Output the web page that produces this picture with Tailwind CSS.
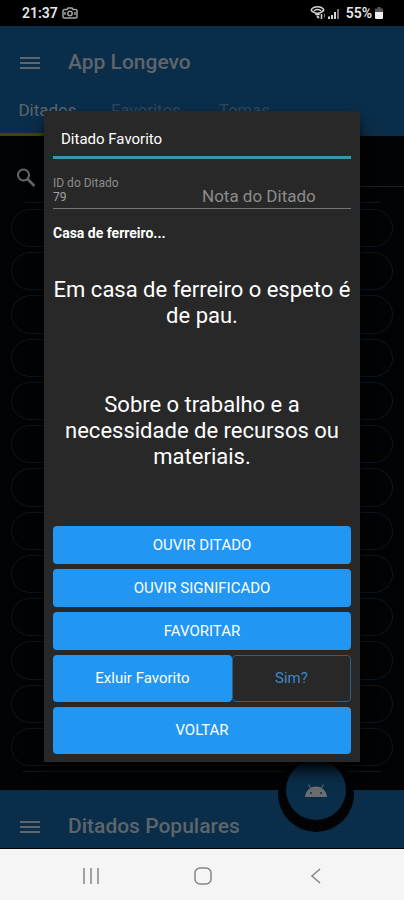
<!DOCTYPE html>
<html lang="pt-BR">
<head>
    <meta charset="UTF-8">
    <meta name="viewport" content="width=device-width, initial-scale=1.0">
    <title>App Longevo</title>
    <script src="https://cdn.jsdelivr.net/npm/@tailwindcss/browser@4"></script>
</head>
<body class="bg-black font-['Roboto',sans-serif]">
    <div class="relative flex min-h-screen flex-col bg-[#020304]">
        <!-- Status bar -->
        <div class="flex h-[26px] items-center justify-between bg-black pl-[22px] pr-5 text-sm font-semibold text-gray-200">
            <div class="flex items-center gap-1">
                <span>21:37</span>
                <svg class="h-3 w-4" viewBox="0 0 16 12" fill="none" stroke="#a3a3a3" stroke-width="1.5">
                    <path d="M5 2.5 6 1h4l1 1.500h2.500A1.500 1.500 0 0 1 15 4v5.500a1.500 1.500 0 0 1-1.500 1.500h-11A1.500 1.500 0 0 1 1 9.500V4a1.500 1.500 0 0 1 1.500-1.500z"/>
                    <circle cx="8" cy="6.500" r="2.200"/>
                    <path d="M3 5v3M13 5v3"/>
                </svg>
            </div>
            <div class="flex items-center gap-[2px]">
                <svg class="h-4 w-4" viewBox="0 0 16 16" fill="none" stroke="#d4d4d4" stroke-width="1.500">
                    <path d="M1 5C4 .8 11 .8 14 5"/>
                    <path d="M1 5c3 4.200 10 4.200 13 0"/>
                    <path d="M4 6c1.500-2 5.500-2 7 0M5.500 10c1-1 3-1 4 0"/>
                    <path d="m7 11 2 2" stroke-width="2"/>
                    <path d="M11.500 9v5" stroke-width="1.500"/>
                    <path d="M14.500 8.500v4" stroke="#777" stroke-width="1"/>
                </svg>
                <svg class="mr-1 h-3 w-3" viewBox="0 0 12 12" fill="#d4d4d4">
                    <path d="M0 9.500h2V12H0zM3 8h2v4H3zM6 5h2v7H6z"/>
                    <path d="M9 2h2v10H9z" fill="#777"/>
                </svg>
                <span>55%</span>
                <svg class="h-3 w-2.5" viewBox="0 0 10 12">
                    <path d="M3.500 0h3v1.500H9V12H1V1.500h2.500z" fill="#555"/>
                    <path d="M1 5h8v5.500A1.500 1.500 0 0 1 7.500 12h-5A1.500 1.500 0 0 1 1 10.500z" fill="#eee"/>
                </svg>
            </div>
        </div>

        <!-- App header -->
        <header class="bg-[#0a2d49] text-[#5e656b]">
            <div class="flex h-[73px] items-center gap-7 px-5">
                <button aria-label="Menu">
                    <svg class="h-4 w-5" viewBox="0 0 20 16" stroke="currentColor" stroke-width="2"><path d="M0 3h20M0 8h20M0 13h20"/></svg>
                </button>
                <h1 class="text-[21px] font-medium">App Longevo</h1>
            </div>
            <nav class="flex h-[37px] text-[17px]">
                <a href="#" class="w-[95px] border-b-3 border-[#4a4306] text-center leading-[22px]">Ditados</a>
                <a href="#" class="w-[102px] text-center leading-[22px] text-[#2f4659]">Favoritos</a>
                <a href="#" class="w-[95px] text-center leading-[22px] text-[#2f4659]">Temas</a>
            </nav>
        </header>

        <!-- Search and list -->
        <main class="flex flex-1 flex-col">
            <div class="ml-4 flex h-[51px] gap-4">
                <svg class="mt-8 h-5 w-5" viewBox="0 0 20 20" fill="none" stroke="#66696b" stroke-width="2">
                    <circle cx="7.500" cy="7" r="5.500"/>
                    <path d="m11.500 11 7 7" stroke-width="2.500"/>
                </svg>
                <input type="search" aria-label="Buscar ditado" class="min-w-0 flex-1 border-b border-[#1c1f22] bg-transparent text-gray-500 outline-none">
            </div>
            <div class="mx-[11px] mt-3 flex flex-1 flex-col">
                <div class="mx-3 h-1 rounded-b-full border-b border-[#0c1820]"></div>
                <ul class="mt-[6px] flex flex-1 flex-col gap-[5px]">
                    <li class="flex-1 rounded-full border border-[#0a1722]"></li>
                    <li class="flex-1 rounded-full border border-[#0a1722]"></li>
                    <li class="flex-1 rounded-full border border-[#0a1722]"></li>
                    <li class="flex-1 rounded-full border border-[#0a1722]"></li>
                    <li class="flex-1 rounded-full border border-[#0a1722]"></li>
                    <li class="flex-1 rounded-full border border-[#0a1722]"></li>
                    <li class="flex-1 rounded-full border border-[#0a1722]"></li>
                    <li class="flex-1 rounded-full border border-[#0a1722]"></li>
                    <li class="flex-1 rounded-full border border-[#0a1722]"></li>
                    <li class="flex-1 rounded-full border border-[#0a1722]"></li>
                    <li class="flex-1 rounded-full border border-[#0a1722]"></li>
                    <li class="flex-1 rounded-full border border-[#0a1722]"></li>
                    <li class="flex-1 rounded-full border border-[#0a1722]"></li>
                </ul>
                <div class="mx-3 mb-[18px] h-[6px] border-b border-[#0c1820]"></div>
            </div>
        </main>

        <!-- Bottom app bar -->
        <footer class="relative flex h-[58px] items-center gap-7 bg-[#0a2d49] px-5 pt-4 text-[#5e656b]">
            <button aria-label="Menu inferior">
                <svg class="h-4 w-5" viewBox="0 0 20 16" stroke="currentColor" stroke-width="2"><path d="M0 3h20M0 8h20M0 13h20"/></svg>
            </button>
            <h2 class="text-[21px] font-medium">Ditados Populares</h2>
            <button aria-label="Assistente" class="absolute -top-[34px] right-[50px] flex size-[76px] items-center justify-center rounded-full bg-[#020304]">
                <span class="mb-2 flex size-[60px] items-center justify-center rounded-full bg-[#0a2d49]">
                    <svg class="h-4 w-6" viewBox="0 0 24 16">
                        <path d="M1 15C1.500 9 6 4.500 12 4.500S22.500 9 23 15z" fill="#6b6e70"/>
                        <path d="m6.500 6-2-3.500m13 3.500 2-3.500" stroke="#6b6e70" stroke-width="1"/>
                        <circle cx="7" cy="11" r="1" fill="#0a2d49"/>
                        <circle cx="17" cy="11" r="1" fill="#0a2d49"/>
                    </svg>
                </span>
            </button>
        </footer>

        <!-- System navigation -->
        <div class="mt-px grid h-[51px] grid-cols-[1fr_46px_1fr] items-center bg-[#f5f5f5] pt-[2px] pl-[2px] text-[#858585]">
            <button aria-label="Recentes" class="justify-self-center">
                <svg class="h-4 w-4" viewBox="0 0 16 16" stroke="currentColor" stroke-width="1.500"><path d="M1 0v16M8 0v16M15 0v16"/></svg>
            </button>
            <button aria-label="Início" class="justify-self-center">
                <svg class="h-[18px] w-[18px]" viewBox="0 0 18 18" fill="none" stroke="currentColor" stroke-width="1.500"><rect x="1" y="1" width="16" height="16" rx="5"/></svg>
            </button>
            <button aria-label="Voltar" class="justify-self-center">
                <svg class="h-4 w-4" viewBox="0 0 16 16" fill="none" stroke="currentColor" stroke-width="1.500"><path d="m13 1-8 7 8 7"/></svg>
            </button>
        </div>

        <!-- Favorite dialog -->
        <div role="dialog" aria-labelledby="dialogTitle" class="absolute inset-x-11 top-[111px] bg-[#282828] px-[9px] pb-2 text-white shadow-lg shadow-black">
            <h2 id="dialogTitle" class="border-b-3 border-[#3c93b3] px-2 pt-[18px] pb-[7px] text-[15px] leading-5">Ditado Favorito</h2>
            <div class="mt-[17px] flex items-end border-b border-[#777] pb-1 text-[#8c8c8c]">
                <div class="w-1/2 text-xs leading-[14px]">
                    <label for="idDitado" class="block">ID do Ditado</label>
                    <input id="idDitado" type="text" value="79" class="block w-full text-[#a0a0a0] outline-none">
                </div>
                <input type="text" aria-label="Nota do Ditado" placeholder="Nota do Ditado" class="h-4 w-1/2 text-[17px] leading-4 outline-none placeholder:text-[#8c8c8c]">
            </div>
            <h3 class="mt-[14px] text-sm leading-5 font-bold">Casa de ferreiro...</h3>
            <p class="mt-[34px] text-center text-[22px] leading-[26px]">Em casa de ferreiro o espeto é de pau.</p>
            <p class="mt-[63px] text-center text-[22px] leading-[26px]">Sobre o trabalho e a necessidade de recursos ou materiais.</p>
            <div class="mt-14 flex flex-col gap-[5px] text-[15px]">
                <button class="h-[38px] rounded-sm bg-[#2196f3] hover:bg-blue-600">OUVIR DITADO</button>
                <button class="h-[38px] rounded-sm bg-[#2196f3] hover:bg-blue-600">OUVIR SIGNIFICADO</button>
                <button class="h-[38px] rounded-sm bg-[#2196f3] hover:bg-blue-600">FAVORITAR</button>
                <div class="flex h-[47px]">
                    <button class="w-3/5 rounded-sm bg-[#2196f3] hover:bg-blue-600">Exluir Favorito</button>
                    <button class="w-2/5 rounded-sm border border-[#2d5f88] text-[#3f87c4]">Sim?</button>
                </div>
                <button class="h-[47px] rounded-sm bg-[#2196f3] hover:bg-blue-600">VOLTAR</button>
            </div>
        </div>
    </div>
</body>
</html>
